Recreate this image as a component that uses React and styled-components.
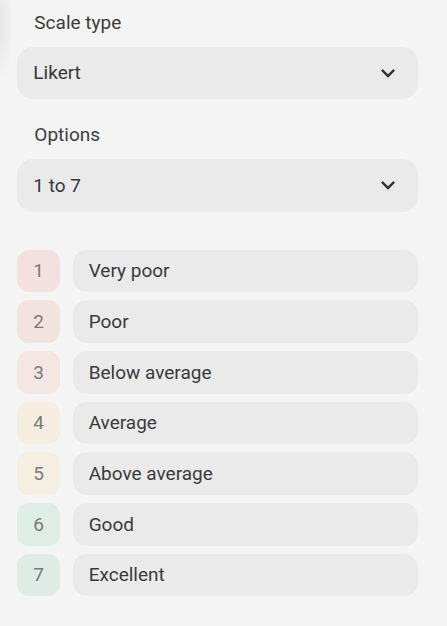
import styled, { createGlobalStyle } from 'styled-components'

const GlobalStyle = createGlobalStyle`
    body {
        margin: 0;
        background-color: #f4f4f4;
        background-image: radial-gradient(ellipse 14px 60px at 0px 24px, rgba(0,0,0,0.06), rgba(0,0,0,0));
        background-repeat: no-repeat;
        font-family: Roboto, "Noto Sans", sans-serif;
        color: #3a3a3a;
    }
`

const Panel = styled.div`
    width: 447px;
    height: 626px;
    box-sizing: border-box;
    padding: 11px 29px 0 17.33px;
    display: flex;
    flex-direction: column;
`

const Field = styled.div`
    display: flex;
    flex-direction: column;
    margin-bottom: ${(p) => p.$last ? '38px' : '24px'};
`

const Label = styled.div`
    font-size: 19px;
    line-height: 24px;
    padding-left: 17px;
    margin-bottom: 11.67px;
    color: #3c3c3c;
`

const Select = styled.div`
    height: 52.67px;
    border-radius: 16px;
    background: #eaeaea;
    display: flex;
    align-items: center;
    justify-content: space-between;
    padding: 0 16px;
    font-size: 19px;
    color: #383838;
`

const Chevron = styled.svg`
    width: 28px;
    height: 28px;
    fill: #333;
`

const List = styled.div`
    display: flex;
    flex-direction: column;
    gap: 8px;
`

const Row = styled.div`
    display: flex;
    gap: 12.67px;
    height: 42.67px;
`

const Badge = styled.div`
    width: 42.67px;
    flex-shrink: 0;
    border-radius: 12px;
    background: ${(p) => p.$bg};
    display: flex;
    align-items: center;
    justify-content: center;
    font-size: 19px;
    color: #7a7a7a;
`

const OptionBox = styled.div`
    flex: 1;
    border-radius: 14px;
    background: #eaeaea;
    display: flex;
    align-items: center;
    padding-left: 16px;
    font-size: 19px;
    color: #3a3a3a;
`

const options = [
    { label: 'Very poor', bg: '#f3e1e1' },
    { label: 'Poor', bg: '#f3e3e0' },
    { label: 'Below average', bg: '#f4e6e2' },
    { label: 'Average', bg: '#f5eee0' },
    { label: 'Above average', bg: '#f5efe3' },
    { label: 'Good', bg: '#deede6' },
    { label: 'Excellent', bg: '#deece5' },
]

const ExpandIcon = () => (
    <Chevron viewBox="0 0 24 24">
        <path d="M16.59 8.59L12 13.17 7.41 8.59 6 10l6 6 6-6z" />
    </Chevron>
)

export default function App() {
    return (
        <>
            <GlobalStyle />
            <Panel>
                <Field>
                    <Label>Scale type</Label>
                    <Select>
                        <span>Likert</span>
                        <ExpandIcon />
                    </Select>
                </Field>
                <Field $last>
                    <Label>Options</Label>
                    <Select>
                        <span>1 to 7</span>
                        <ExpandIcon />
                    </Select>
                </Field>
                <List>
                    {options.map((opt, index) => (
                        <Row key={index}>
                            <Badge $bg={opt.bg}>{index + 1}</Badge>
                            <OptionBox>{opt.label}</OptionBox>
                        </Row>
                    ))}
                </List>
            </Panel>
        </>
    )
}
